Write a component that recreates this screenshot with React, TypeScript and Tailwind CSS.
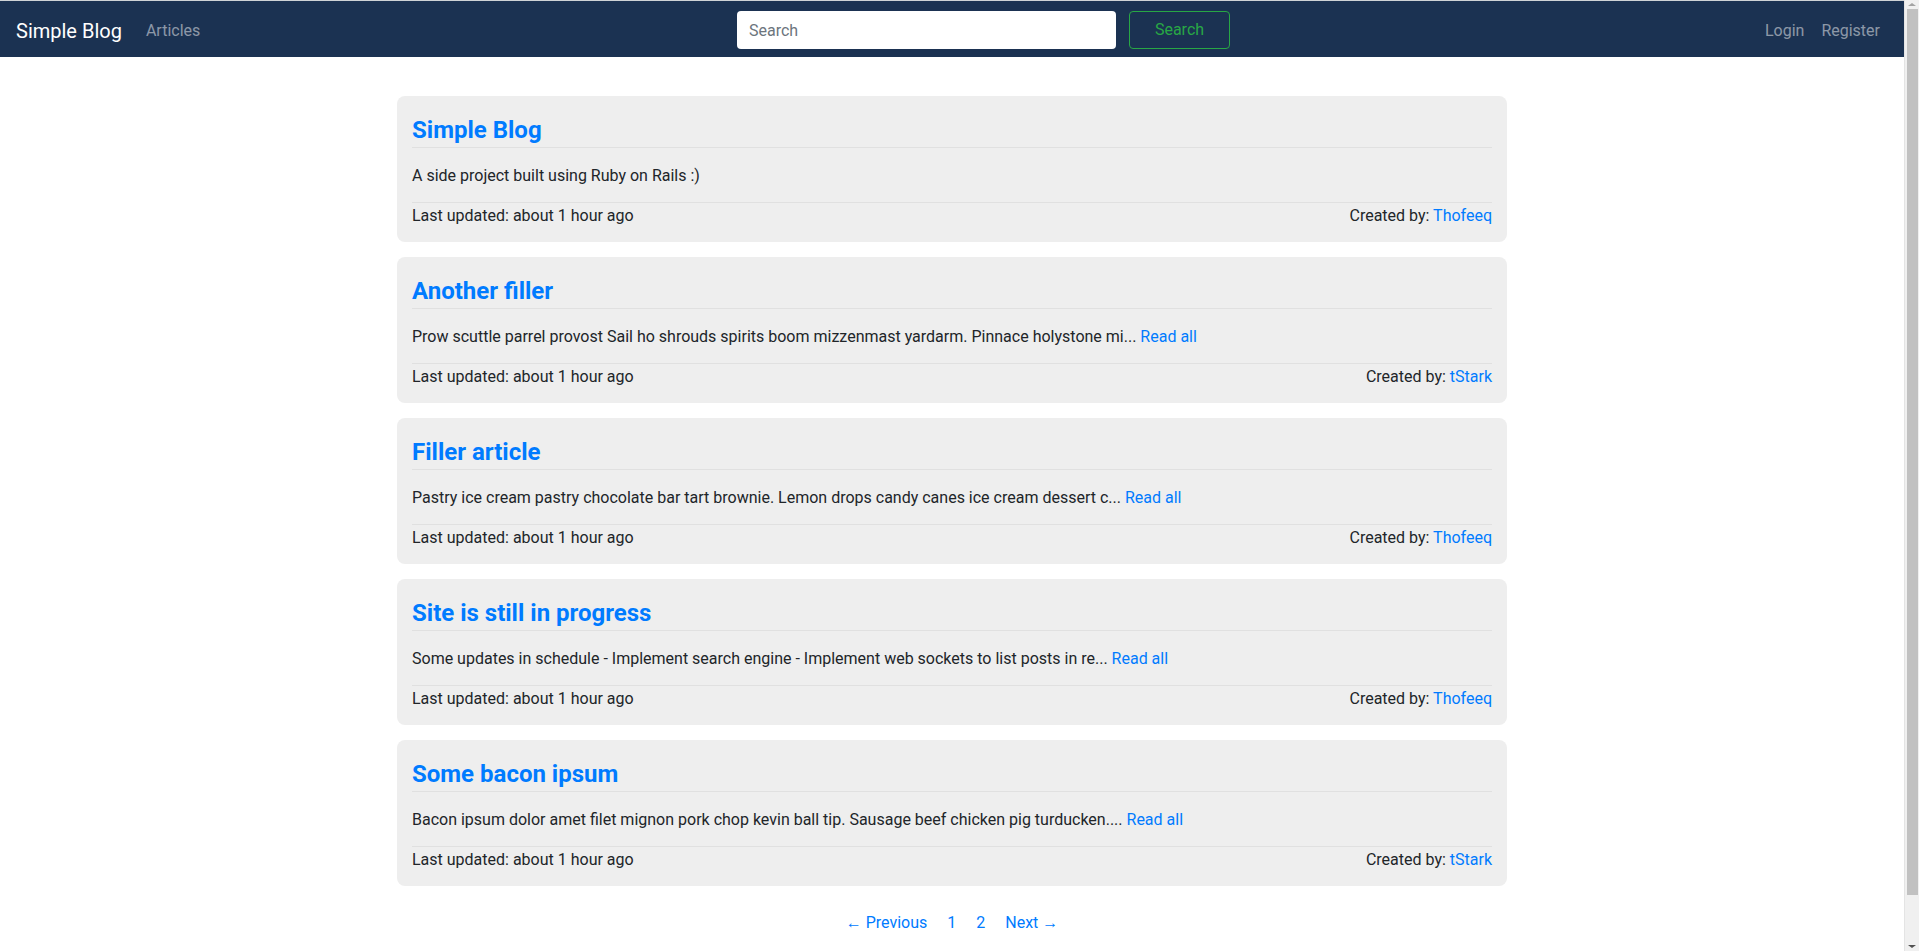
const articles = [
  {
    title: "Simple Blog",
    body: "A side project built using Ruby on Rails :)",
    more: false,
    author: "Thofeeq",
  },
  {
    title: "Another filler",
    body: "Prow scuttle parrel provost Sail ho shrouds spirits boom mizzenmast yardarm. Pinnace holystone mi...",
    more: true,
    author: "tStark",
  },
  {
    title: "Filler article",
    body: "Pastry ice cream pastry chocolate bar tart brownie. Lemon drops candy canes ice cream dessert c...",
    more: true,
    author: "Thofeeq",
  },
  {
    title: "Site is still in progress",
    body: "Some updates in schedule - Implement search engine - Implement web sockets to list posts in re...",
    more: true,
    author: "Thofeeq",
  },
  {
    title: "Some bacon ipsum",
    body: "Bacon ipsum dolor amet filet mignon pork chop kevin ball tip. Sausage beef chicken pig turducken....",
    more: true,
    author: "tStark",
  },
];

function Navbar() {
  return (
    <nav className="h-[57px] border-t border-[#cfd3d6] bg-[#1b3252] grid grid-cols-[721px_auto_1fr] items-center pl-4 pr-4">
      <div className="flex items-center mt-[3px]">
        <a href="#" className="text-white text-[20px] leading-[30px] mr-[16px]">
          Simple Blog
        </a>
        <a href="#" className="text-white/50 text-[16px] px-[8px]">
          Articles
        </a>
      </div>
      <form className="flex items-center gap-[13px] mt-[2px]" onSubmit={(e) => e.preventDefault()}>
        <input
          type="text"
          placeholder="Search"
          className="w-[379px] h-[38px] bg-white rounded-[4px] px-[12px] pt-[1px] text-[16px] text-[#495057] placeholder:text-[#6c757d] outline-none"
        />
        <button className="h-[38px] w-[101px] rounded-[4px] border border-[#28a745] text-[#28a745] text-[16px]">
          Search
        </button>
      </form>
      <div className="flex items-center justify-end pr-[8px] mt-[3px]">
        <a href="#" className="text-white/50 text-[16px] px-[8px]">
          Login
        </a>
        <a href="#" className="text-white/50 text-[16px] pl-[9px]">
          Register
        </a>
      </div>
    </nav>
  );
}

function ArticleCard({ a }: { a: (typeof articles)[number] }) {
  return (
    <div className="bg-[#eeeeee] rounded-[8px] px-[15px] pt-[20px] pb-[14px]">
      <h4 className="text-[24px] leading-[29px] font-bold text-[#007bff] pb-[2px] border-b border-[#e0e0e0]">
        {a.title}
      </h4>
      <p className="mt-[16px] mb-[14px] text-[16px] leading-[24px] text-[#212529]">
        {a.body}{" "}
        {a.more && (
          <a href="#" className="text-[#007bff]">
            Read all
          </a>
        )}
      </p>
      <div className="border-t border-[#e0e0e0] pt-[1px] flex justify-between text-[16px] leading-[24px] text-[#212529]">
        <span>Last updated: about 1 hour ago</span>
        <span>
          Created by:{" "}
          <a href="#" className="text-[#007bff]">
            {a.author}
          </a>
        </span>
      </div>
    </div>
  );
}

function FakeScrollbar() {
  return (
    <div className="fixed top-0 right-0 w-[15px] h-screen bg-[#f0f0f0] border-l border-[#e4e4e4] flex flex-col items-center">
      <div className="h-[8px] w-full flex items-center justify-center">
        <div className="w-0 h-0 border-l-[4px] border-r-[4px] border-b-[3px] border-l-transparent border-r-transparent border-b-[#a3a3a3]" />
      </div>
      <div className="w-[11px] h-[886px] mt-[1px] bg-[#c1c1c1]" />
      <div className="flex-1" />
      <div className="h-[10px] w-full flex items-center justify-center">
        <div className="w-0 h-0 border-l-[4px] border-r-[4px] border-t-[3px] border-l-transparent border-r-transparent border-t-[#505050]" />
      </div>
    </div>
  );
}

export default function App() {
  return (
    <div className="min-h-screen bg-white font-['Roboto','Liberation_Sans',sans-serif] pr-[15px]">
      <Navbar />
      <main className="w-[1110px] mx-auto pt-[39px] pb-[80px]">
        <div className="flex flex-col gap-[15px]">
          {articles.map((a) => (
            <ArticleCard key={a.title} a={a} />
          ))}
        </div>
        <div className="flex justify-center gap-[20px] mt-[25px] text-[16px] leading-[24px] text-[#007bff]">
          <a href="#">← Previous</a>
          <a href="#">1</a>
          <a href="#">2</a>
          <a href="#">Next →</a>
        </div>
      </main>
      <FakeScrollbar />
    </div>
  );
}
